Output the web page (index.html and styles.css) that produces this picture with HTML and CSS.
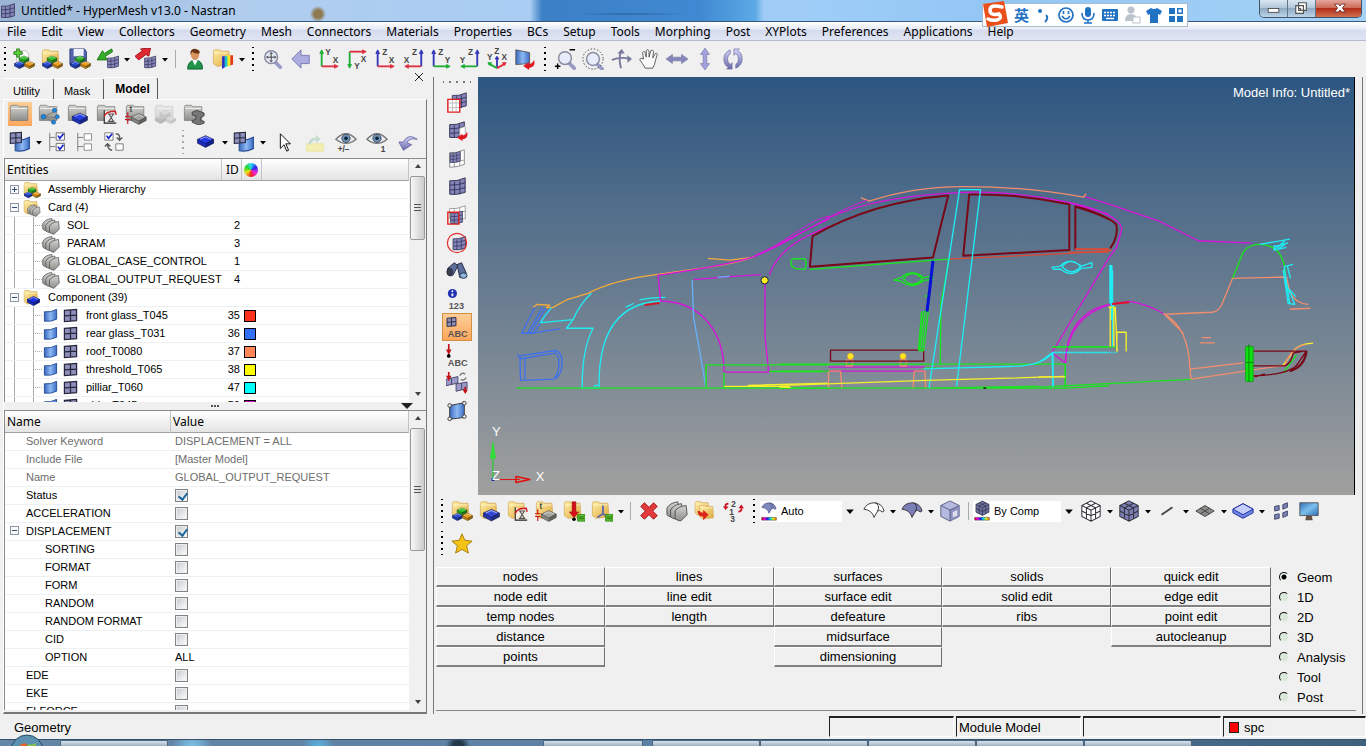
FILE: index.html
```html
<!DOCTYPE html>
<html lang="en">
<head>
<meta charset="utf-8">
<title>Untitled* - HyperMesh v13.0 - Nastran</title>
<link rel="stylesheet" href="styles.css">
</head>
<body>
<svg class="sprite" aria-hidden="true">
  <defs>
    <linearGradient id="gFolder" x2="1" y2="1"><stop stop-color="#fff0a8"/><stop offset="1" stop-color="#dfa73c"/></linearGradient>
    <linearGradient id="gGrey" x2="0" y2="1"><stop stop-color="#d4d4d0"/><stop offset="1" stop-color="#8d8d8a"/></linearGradient>
    <linearGradient id="gSurf" x2="1" y2="0"><stop stop-color="#3a68c0"/><stop offset=".5" stop-color="#8db9f2"/><stop offset="1" stop-color="#3d6ec8"/></linearGradient>
    <linearGradient id="gRain" x2="1" y2="0"><stop stop-color="#e00"/><stop offset=".2" stop-color="#e0e"/><stop offset=".4" stop-color="#22e"/><stop offset=".6" stop-color="#0dd"/><stop offset=".8" stop-color="#ee0"/><stop offset="1" stop-color="#f60"/></linearGradient>
    <linearGradient id="gLav" x2="0" y2="1"><stop stop-color="#d5d5ff"/><stop offset="1" stop-color="#6868a8"/></linearGradient>
    <linearGradient id="gScreen" x2="1" y2="1"><stop stop-color="#2f72b8"/><stop offset=".5" stop-color="#7cc0ee"/><stop offset="1" stop-color="#2a6cb0"/></linearGradient>
  </defs>
  <symbol id="box" viewBox="0 0 16 12"><path d="M8 .5L15.500 4v3.500L8 11.500.5 7.500V4z" fill="currentColor"/><path d="M.5 4L8 8v3.500L.5 7.500z" fill="#000" opacity=".2"/><path d="M15.500 4L8 8v3.500l7.500-4z" fill="#000" opacity=".4"/><path d="M8 .5L15.500 4v3.500L8 11.500.5 7.500V4z M.5 4L8 8l7.500-4" fill="none" stroke="#000" stroke-opacity=".5" stroke-width=".7"/><path d="M3 4l5-2.300L13 4" fill="none" stroke="#fff" stroke-opacity=".5"/></symbol>
  <symbol id="folder" viewBox="0 0 24 24"><path d="M1.500 3.500l1-1.500h6l1 1.500h9l1 15-14 1.500-4-3z" fill="url(#gFolder)" stroke="#d0a858" stroke-width=".8"/><path d="M2 5.500h16" stroke="#fff5c8"/></symbol>
  <symbol id="gfolder" viewBox="0 0 24 24"><path d="M1.500 4.500l1-2h7l1 1.500h10v15h-19z" fill="url(#gGrey)" stroke="#777" stroke-width=".8"/><path d="M2 6h18" stroke="#eee"/></symbol>
  <symbol id="blocks" viewBox="0 0 24 24"><use href="#box" x="6" y="8" width="12" height="9" color="#35c22c"/><use href="#box" x="1" y="14" width="12" height="9" color="#2d4fd8"/><use href="#box" x="12" y="14" width="12" height="9" color="#eda020"/></symbol>
  <symbol id="mesh" viewBox="0 0 20 20"><path d="M2 4Q9 5 18 1V16Q10 19 2 18z" fill="#8585ba" stroke="#303050"/><path d="M2 8.500Q10 9 18 6M2 13.500Q10 14 18 11M7 5v13.500M12.500 3.500V18" fill="none" stroke="#34345a"/></symbol>
  <symbol id="surface" viewBox="0 0 16 16"><path d="M1.500 4Q8 5 14.500 1.500V12Q8 15 1.500 14z" fill="url(#gSurf)" stroke="#234a94"/></symbol>
  <symbol id="cell4" viewBox="0 0 16 16"><path d="M1.500 2.500l13-1v12l-13 1zM8 2v12M1.500 8.500l13-1" fill="#8e8ebb" stroke="#26263a" stroke-width="1.300"/></symbol>
  <symbol id="cards" viewBox="0 0 24 24"><g fill="url(#gGrey)" stroke="#505050"><path d="M1 9q3-6 12-7l1 10-7 7q-5-1-6-3z"/><path d="M5 11q3-6 12-7l1 10-7 7q-5-1-6-3z"/><path d="M10 12q3-5 12-6l1 10-7 7q-5-1-6-3z"/></g></symbol>
  <symbol id="caret" viewBox="0 0 10 24"><path d="M2 11h6l-3 3.500z" fill="#000"/></symbol>
  <symbol id="lens" viewBox="0 0 24 24"><path d="M14 15l6 6" stroke="#9a9ac8" stroke-width="4" stroke-linecap="round"/><circle cx="10" cy="10" r="7" fill="#e6ecfa" stroke="#8a8aa0" stroke-width="1.600"/></symbol>
  <symbol id="reddown" viewBox="0 0 24 24"><path d="M10 1h4v11h3l-5 6-5-6h3z" fill="#d8101c" stroke="#8a0008" stroke-width=".6"/></symbol>
  <symbol id="hook" viewBox="0 0 12 10"><path d="M11 0q2 7-5 8v2L0 6l6-4v2q3 0 5-4z" fill="#e01820"/></symbol>
  <symbol id="cube3" viewBox="0 0 24 24"><path d="M12 1l10 5v12l-10 5-10-5V6z" fill="currentColor"/><path d="M12 1l10 5v12l-10 5-10-5V6zM2 6l10 5 10-5M12 11v12M7 3.500l10 5V20.500M17 3.500L7 8.500v12M2 12l10 5 10-5" fill="none" stroke="#30303c" stroke-width="1.100"/></symbol>
  <symbol id="eye" viewBox="0 0 24 24"><path d="M1 9Q12-3 23 9q-11 9-22 0z" fill="#e8edf2" stroke="#777" stroke-width="1.500"/><circle cx="12" cy="8" r="4.500" fill="#6b93b8" stroke="#445"/><circle cx="12" cy="8" r="2" fill="#123"/></symbol>
  <symbol id="sheet" viewBox="0 0 24 24"><path d="M1 10Q4 3 13 3q8 1 10 9l-2 1q-3-3-5-1l-4 7q-2-8-11-9z"/><path d="M13 3q6 2 3 9" fill="none"/></symbol>
  <symbol id="hourglass" viewBox="0 0 24 24"><path d="M9 8v14h13" fill="none" stroke="#222" stroke-width="1.200"/><path d="M9 15q1-6 12-6l1 4" fill="none" stroke="#d01c20" stroke-width="1.500"/><path d="M13 12h7M13 20h7M14 12l5 8M19 12l-5 8" stroke="#555" stroke-width="1.200"/></symbol>
  <symbol id="thick" viewBox="0 0 24 24"><use href="#box" x="6" y="11" width="18" height="13" color="#a5a5a0"/><path d="M3 10v5M3 18v5M0 15h6M0 18h6" stroke="#d01020" stroke-width="1.200"/></symbol>
</svg>

<header class="titlebar">
  <svg class="app-icon"><use href="#mesh"/></svg>
  <h1>Untitled* - HyperMesh v13.0 - Nastran</h1>
  <div class="window-buttons">
    <button aria-label="Minimize"><svg viewBox="0 0 28 17"><rect x="8.500" y="8.500" width="11" height="4" fill="#fff" stroke="#555"/></svg></button>
    <button aria-label="Restore"><svg viewBox="0 0 28 17"><path d="M11 2.500h8v8h-8z M8 5.500h8v8H8z M11 8.500h2v2h-2z" fill="#fff" stroke="#555" stroke-width="1.200"/></svg></button>
    <button class="close" aria-label="Close"><svg viewBox="0 0 46 17"><path d="M19 4h4l1.500 2L26 4h4l-3 4 3 4h-4l-1.500-2L23 12h-4l3-4z" fill="#fff" stroke="#5a1a14" stroke-width=".8"/></svg></button>
  </div>
  <div class="ime">
    <svg class="ime-logo" viewBox="0 0 28 28"><path d="M2 4L23 1l4 22-21 4z" fill="#e9501c"/><path d="M21 7Q9 4 9 10t9 4q4 4-2 6-5 1-9-1" fill="none" stroke="#fff" stroke-width="3.500" stroke-linecap="round"/></svg>
    <span class="ime-lang">英</span>
    <svg viewBox="0 0 22 22" class="ime-i"><circle cx="7" cy="7" r="2" fill="#2272c3"/><path d="M13 11q3 3-1 7" stroke="#2272c3" stroke-width="2" fill="none"/></svg>
    <svg viewBox="0 0 22 22" class="ime-i"><g fill="none" stroke="#2272c3" stroke-width="1.700"><circle cx="11" cy="11" r="7"/><path d="M7 12q4 6 8 0M8.500 7v3M13.500 7v3"/></g></svg>
    <svg viewBox="0 0 22 22" class="ime-i"><rect x="8" y="3" width="6" height="10" rx="3" fill="#2272c3"/><path d="M5 9q0 7 6 7t6-7M11 16v3M7 19h8" fill="none" stroke="#2272c3" stroke-width="1.600"/></svg>
    <svg viewBox="0 0 22 22" class="ime-i"><rect x="3" y="5" width="16" height="12" rx="1" fill="#2272c3"/><path d="M5 8.500h12M5 11.500h12" stroke="#fff" stroke-width="1.500" stroke-dasharray="2 1"/><path d="M7 14.500h8" stroke="#fff" stroke-width="1.500"/></svg>
    <svg viewBox="0 0 22 22" class="ime-i"><circle cx="10" cy="6" r="3.500" fill="#bcc3cc"/><path d="M4 17q0-7 6-7t6 7z" fill="#bcc3cc"/><rect x="12" y="13" width="7" height="6" fill="#fff" stroke="#bcc3cc"/></svg>
    <svg viewBox="0 0 22 22" class="ime-i"><path d="M8 4q3 2 6 0l5 3-2 4-2-1v9H7v-9l-2 1-2-4z" fill="#2272c3"/></svg>
    <svg viewBox="0 0 22 22" class="ime-i"><path d="M4 4h6v6H4zM4 12h6v6H4zM12 12h6v6h-6z" fill="#2272c3"/><path d="M12.700 4.700h4.600v4.600h-4.600z" fill="#fff" stroke="#2272c3" stroke-width="1.400"/></svg>
  </div>
</header>

<nav class="menubar" aria-label="Main menu">
  <button>File</button><button>Edit</button><button>View</button><button>Collectors</button><button>Geometry</button><button>Mesh</button><button>Connectors</button><button>Materials</button><button>Properties</button><button>BCs</button><button>Setup</button><button>Tools</button><button>Morphing</button><button>Post</button><button>XYPlots</button><button>Preferences</button><button>Applications</button><button>Help</button>
</nav>

<div class="toolbar top-tools" role="toolbar" aria-label="Standard">
  <i class="grip"></i>
  <button class="tool" aria-label="New"><svg viewBox="0 0 24 24"><path d="M4 3h10l3 3v14H4z" fill="#fbfbfb" stroke="#bbb"/><use href="#blocks"/><path d="M1 4h3V1h3v3h3v3H7v3H4V7H1z" fill="#5fd042" stroke="#27801b"/></svg></button>
  <button class="tool" aria-label="Open"><svg viewBox="0 0 24 24"><use href="#folder"/><use href="#blocks"/></svg></button>
  <button class="tool" aria-label="Save"><svg viewBox="0 0 24 24"><path d="M1 1h16l2 3v14H1z" fill="#5163aa" stroke="#30407c"/><path d="M5 1h11v8H5z" fill="#eef1fa"/><path d="M6 13h8v5H6z" fill="#ddd"/><use href="#blocks"/></svg></button>
  <button class="tool" aria-label="Import"><svg viewBox="0 0 24 24"><use href="#mesh" x="10" y="8" width="15" height="15"/><path d="M16 1l-8 5-2-3-6 10h11l-2-4 8-5z" fill="#35ad2b" stroke="#187414"/></svg></button>
  <button class="drop" aria-label="Import options"><svg><use href="#caret"/></svg></button>
  <button class="tool" aria-label="Export"><svg viewBox="0 0 24 24"><use href="#mesh" x="9" y="8" width="15" height="15"/><path d="M0 9l8-6-2-2 11-1-2 9-3-2-8 6z" fill="#e02a32" stroke="#9b1018"/></svg></button>
  <button class="drop" aria-label="Export options"><svg><use href="#caret"/></svg></button>
  <i class="sep"></i>
  <button class="tool" aria-label="User profiles"><svg viewBox="0 0 24 24"><path d="M4 23q0-9 8-10 9 1 8 10z" fill="#22944b" stroke="#0c5c2a"/><path d="M9 13l3 6 3-6z" fill="#fff"/><ellipse cx="12" cy="7" rx="4.500" ry="6" fill="#d9935d"/><path d="M7 8q-1-8 6-7 5 1 4 5-6 0-8-2-1 1-2 4z" fill="#693516"/></svg></button>
  <button class="tool" aria-label="Open results"><svg viewBox="0 0 24 24"><use href="#folder"/><path d="M11 9h3v12l-3 2z" fill="#2530c8"/><path d="M14 9h3v11l-3 1z" fill="#15c6cf"/><path d="M17 8h3v11l-3 1z" fill="#f4e920"/><path d="M20 8h3v10l-3 1z" fill="#e33a14"/></svg></button>
  <button class="drop" aria-label="Results options"><svg><use href="#caret"/></svg></button>
  <i class="grip mid"></i>
  <button class="tool" aria-label="Fit"><svg viewBox="0 0 24 24"><use href="#lens"/><path d="M10 5v10M5 10h10M8.500 6.500L10 5l1.500 1.500M8.500 13.500L10 15l1.500-1.500M6.500 8.500L5 10l1.500 1.500M13.500 8.500L15 10l-1.500 1.500" stroke="#333" fill="none"/></svg></button>
  <button class="tool" aria-label="Previous view"><svg viewBox="0 0 24 24"><path d="M2 12L12 2v6h9v9h-9v5z" fill="#abace0" stroke="#7779b0"/></svg></button>
  <button class="tool" aria-label="XY top"><svg viewBox="0 0 24 24" class="axis"><path class="g" d="M4 20V5"/><path class="gf" d="M2 6l2-4 2 4z"/><path class="r" d="M4 20h14"/><path class="rf" d="M18 18l4 2-4 2z"/><text x="8" y="8">Y</text><text x="16" y="16">X</text></svg></button>
  <button class="tool" aria-label="XY bottom"><svg viewBox="0 0 24 24" class="axis"><path class="g" d="M4 4v14"/><path class="gf" d="M2 18l2 4 2-4z"/><path class="r" d="M4 4h14"/><path class="rf" d="M18 2l4 2-4 2z"/><text x="9" y="23">Y</text><text x="16" y="15">X</text></svg></button>
  <button class="tool" aria-label="XZ left"><svg viewBox="0 0 24 24" class="axis"><path class="b" d="M4 20V5"/><path class="bf" d="M2 6l2-4 2 4z"/><path class="r" d="M4 20h14"/><path class="rf" d="M18 18l4 2-4 2z"/><text x="9" y="8">Z</text><text x="16" y="16">X</text></svg></button>
  <button class="tool" aria-label="XZ right"><svg viewBox="0 0 24 24" class="axis"><path class="b" d="M21 20V5"/><path class="bf" d="M19 6l2-4 2 4z"/><path class="r" d="M21 20H7"/><path class="rf" d="M7 18l-4 2 4 2z"/><text x="11" y="8">Z</text><text x="2" y="16">X</text></svg></button>
  <button class="tool" aria-label="YZ rear"><svg viewBox="0 0 24 24" class="axis"><path class="b" d="M4 20V5"/><path class="bf" d="M2 6l2-4 2 4z"/><path class="g" d="M4 20h14"/><path class="gf" d="M18 18l4 2-4 2z"/><text x="9" y="8">Z</text><text x="16" y="16">Y</text></svg></button>
  <button class="tool" aria-label="YZ front"><svg viewBox="0 0 24 24" class="axis"><path class="b" d="M21 20V5"/><path class="bf" d="M19 6l2-4 2 4z"/><path class="g" d="M21 20H7"/><path class="gf" d="M7 18l-4 2 4 2z"/><text x="11" y="8">Z</text><text x="2" y="16">Y</text></svg></button>
  <button class="tool" aria-label="Isometric"><svg viewBox="0 0 24 24" class="axis"><path class="b" d="M12 21V12"/><path class="bf" d="M10 12l2-3 2 3z"/><path class="g" d="M12 22l-9-5"/><path class="gf" d="M2 16l4 0-2 3z"/><path class="r" d="M12 22l9-5"/><path class="rf" d="M22 16l-4 0 2 3z"/><text x="9" y="7">Z</text><text x="1" y="13">Y</text><text x="17" y="13">X</text></svg></button>
  <button class="tool" aria-label="Reverse view"><svg viewBox="0 0 24 24"><path d="M2 2l15 3v12L2 18z" fill="url(#gSurf)" stroke="#555"/><use href="#hook" x="10" y="13" width="13" height="11"/></svg></button>
  <i class="grip mid"></i>
  <button class="tool" aria-label="Zoom in or out"><svg viewBox="0 0 24 24"><use href="#lens" x="2" y="1"/><path d="M17 2h6M1 20h6M4 17v6" stroke="#000" stroke-width="1.600"/></svg></button>
  <button class="tool" aria-label="Circle zoom"><svg viewBox="0 0 24 24"><use href="#lens" x="2" y="2"/><circle cx="12" cy="12" r="11" fill="none" stroke="#333" stroke-dasharray="1.500 2"/></svg></button>
  <button class="tool" aria-label="Rotate"><svg viewBox="0 0 24 24"><path d="M2 13q10-4 20-1M12 3q-3 9 0 19" fill="none" stroke="#777a9c" stroke-width="2"/><path d="M8 6l5-5 3 5zM19 8l5 4-5 4z" fill="#777a9c"/></svg></button>
  <button class="tool" aria-label="Pan"><svg viewBox="0 0 24 24"><path d="M8 22q-3-5-6-9 0-3 4-1L5 5q2-3 3 1l1 4V3q2-3 3 0v7l2-7q2-2 3 1l-1 7 3-5q2-1 2 1-2 6-3 11l-2 4z" fill="#fafafa" stroke="#555"/></svg></button>
  <button class="tool" aria-label="Arrow left and right"><svg viewBox="0 0 24 24"><path d="M0 12l7-5v3h10V7l7 5-7 5v-3H7v3z" fill="#8686bd" stroke="#6c6c9c" stroke-width=".6"/></svg></button>
  <button class="tool" aria-label="Arrow up and down"><svg viewBox="0 0 24 24"><path d="M12 0l5 7h-3v10h3l-5 7-5-7h3V7H7z" fill="#a1a1dc" stroke="#6c6c9c" stroke-width=".6"/></svg></button>
  <button class="tool" aria-label="Spin"><svg viewBox="0 0 24 24"><path d="M9 2q-7 3-7 10t5 9l-2 2h6v-7l-2 2q-3-2-3-6t3-6zM15 22q7-3 7-10t-5-9l2-2h-6v7l2-2q3 2 3 6t-3 6z" fill="url(#gLav)" stroke="#67679a" stroke-width=".7"/></svg></button>
</div>

<main class="workspace">
  <aside class="dock">
    <div class="tabs" role="tablist"><button role="tab">Utility</button><button role="tab">Mask</button><button role="tab" class="active" aria-selected="true">Model</button><button class="dock-close" aria-label="Close panel"><svg viewBox="0 0 8 8"><path d="M0 0l8 8M8 0L0 8" stroke="#222"/></svg></button></div>
    <div class="browser">
      <div class="toolbar views">
        <button class="tool on" aria-label="Model view"><svg viewBox="0 0 24 24"><use href="#gfolder"/></svg></button>
        <button class="tool" aria-label="Assembly view"><svg viewBox="0 0 24 24"><use href="#gfolder"/><path d="M7 15l11-6M7 15l12 1M7 15l9 6" stroke="#777"/><g fill="#1f86d8" stroke="#0b4c8c" stroke-width=".5"><circle cx="6" cy="15" r="2.600"/><circle cx="18" cy="8" r="2.300"/><circle cx="21" cy="15" r="2.300"/><circle cx="17" cy="21" r="2.300"/></g></svg></button>
        <button class="tool" aria-label="Component view"><svg viewBox="0 0 24 24"><use href="#gfolder"/><use href="#box" x="5" y="10" width="18" height="14" color="#2840e8"/></svg></button>
        <button class="tool" aria-label="Material view"><svg viewBox="0 0 24 24"><use href="#gfolder"/><path d="M9 9h13v14H9z" fill="#eee"/><use href="#hourglass"/></svg></button>
        <button class="tool" aria-label="Property view"><svg viewBox="0 0 24 24" class="axis"><use href="#gfolder"/><use href="#thick"/><text x="5" y="10">t</text></svg></button>
        <button class="tool faded" aria-label="Laminate view"><svg viewBox="0 0 24 24"><use href="#gfolder"/><use href="#blocks"/></svg></button>
        <button class="tool" aria-label="Beam view"><svg viewBox="0 0 24 24"><use href="#gfolder"/><path d="M10 10l5-2 8 3v3l-4 2v3l4 1v2l-6 2-7-3v-2l4-1v-4l-4-1z" fill="#777" stroke="#444"/></svg></button>
      </div>
      <div class="toolbar views states">
        <button class="tool" aria-label="Entity state"><svg viewBox="0 0 24 24"><use href="#surface" x="5" y="5" width="19" height="19"/><use href="#cell4" x="0" y="0" width="15" height="15"/></svg></button>
        <button class="drop" aria-label="State options"><svg><use href="#caret"/></svg></button>
        <button class="tool" aria-label="All"><svg viewBox="0 0 24 24"><path d="M3 2v20M3 7h6M3 17h6" stroke="#777" fill="none"/><path d="M10 2h9v8h-9zM10 13.500h9v8h-9z" fill="#fff" stroke="#666"/><path d="M12 5l2 3 4-5M12 17l2 3 4-5" stroke="#1520c8" stroke-width="1.800" fill="none"/></svg></button>
        <button class="tool" aria-label="None"><svg viewBox="0 0 24 24"><path d="M3 2v20M3 7h6M3 17h6" stroke="#777" fill="none"/><path d="M10 3h8v7h-8zM10 14h8v7h-8z" fill="#fff" stroke="#888"/></svg></button>
        <button class="tool" aria-label="Reverse"><svg viewBox="0 0 24 24"><path d="M2 2h9v8H2zM14 14h8v7h-8z" fill="#fff" stroke="#777"/><path d="M4 5l2 3 4-5" stroke="#1520c8" stroke-width="1.800" fill="none"/><path d="M14 3q5 0 4 6M15 7l3 3 3-3M10 21q-5-1-5-6M2 17l3-3 3 3" stroke="#555" stroke-width="1.500" fill="none"/></svg></button>
        <i class="grip pale"></i>
        <button class="tool" aria-label="Elements"><svg viewBox="0 0 24 24"><use href="#box" x="2" y="4" width="19" height="15" color="#2338e6"/></svg></button>
        <button class="drop" aria-label="Element options"><svg><use href="#caret"/></svg></button>
        <button class="tool" aria-label="Elements and geometry"><svg viewBox="0 0 24 24"><use href="#surface" x="5" y="5" width="19" height="19"/><use href="#cell4" x="0" y="0" width="15" height="15"/></svg></button>
        <button class="drop" aria-label="Geometry options"><svg><use href="#caret"/></svg></button>
        <button class="tool" aria-label="Select"><svg viewBox="0 0 24 24"><path d="M8 3v16l4-4 3 7 2-1-3-7h5z" fill="#fff" stroke="#000"/></svg></button>
        <button class="tool" aria-label="Add to panel"><svg viewBox="0 0 24 24"><path d="M3 14h18v8H3z" fill="#f4efb2" stroke="#ebe49d"/><path d="M5 15q0-8 8-8V4l5 5-5 4v-3q-4 0-6 5z" fill="#c3dccf"/></svg></button>
        <button class="tool" aria-label="Show or hide"><svg viewBox="0 0 24 24" class="axis"><use href="#eye"/><text x="3" y="23">+/−</text></svg></button>
        <button class="tool" aria-label="Isolate"><svg viewBox="0 0 24 24" class="axis"><use href="#eye"/><text x="16" y="23">1</text></svg></button>
        <button class="tool" aria-label="Undo"><svg viewBox="0 0 24 24"><path d="M22 9Q12 2 7 12l-5 0 5 9 9-6-5-2q2-6 11-4z" fill="url(#gLav)" stroke="#6a6aa6"/></svg></button>
      </div>
      <section class="pane tree">
        <div class="pane-body">
          <table>
            <colgroup><col class="c-ent"><col class="c-id"><col class="c-col"><col></colgroup>
            <thead><tr><th>Entities</th><th>ID</th><th><span class="wheel"></span></th><th></th></tr></thead>
            <tbody>
              <tr><td><div class="node top"><i class="twist plus"></i><svg viewBox="0 0 24 24"><use href="#folder"/><use href="#blocks"/></svg>Assembly Hierarchy</div></td><td></td><td></td><td></td></tr>
              <tr><td><div class="node top"><i class="twist"></i><svg viewBox="0 0 24 24"><use href="#folder"/><use href="#cards" x="5" y="6" width="19" height="18"/></svg>Card (4)</div></td><td></td><td></td><td></td></tr>
              <tr><td><div class="node leaf"><svg><use href="#cards"/></svg>SOL</div></td><td>2</td><td></td><td></td></tr>
              <tr><td><div class="node leaf"><svg><use href="#cards"/></svg>PARAM</div></td><td>3</td><td></td><td></td></tr>
              <tr><td><div class="node leaf"><svg><use href="#cards"/></svg>GLOBAL_CASE_CONTROL</div></td><td>1</td><td></td><td></td></tr>
              <tr><td><div class="node leaf"><svg><use href="#cards"/></svg>GLOBAL_OUTPUT_REQUEST</div></td><td>4</td><td></td><td></td></tr>
              <tr><td><div class="node top"><i class="twist"></i><svg viewBox="0 0 24 24"><use href="#folder"/><use href="#box" x="5" y="9" width="18" height="14" color="#1c34e8"/></svg>Component (39)</div></td><td></td><td></td><td></td></tr>
              <tr><td><div class="node leaf comp"><svg><use href="#surface"/></svg><svg><use href="#cell4"/></svg>front glass_T045</div></td><td>35</td><td><i class="swatch red"></i></td><td></td></tr>
              <tr><td><div class="node leaf comp"><svg><use href="#surface"/></svg><svg><use href="#cell4"/></svg>rear glass_T031</div></td><td>36</td><td><i class="swatch blue"></i></td><td></td></tr>
              <tr><td><div class="node leaf comp"><svg><use href="#surface"/></svg><svg><use href="#cell4"/></svg>roof_T0080</div></td><td>37</td><td><i class="swatch coral"></i></td><td></td></tr>
              <tr><td><div class="node leaf comp"><svg><use href="#surface"/></svg><svg><use href="#cell4"/></svg>threshold_T065</div></td><td>38</td><td><i class="swatch yellow"></i></td><td></td></tr>
              <tr><td><div class="node leaf comp"><svg><use href="#surface"/></svg><svg><use href="#cell4"/></svg>pilliar_T060</div></td><td>47</td><td><i class="swatch cyan"></i></td><td></td></tr>
              <tr><td><div class="node leaf comp"><svg><use href="#surface"/></svg><svg><use href="#cell4"/></svg>side_T045</div></td><td>50</td><td><i class="swatch magenta"></i></td><td></td></tr>
            </tbody>
          </table>
        </div>
        <div class="scroll"><i class="up"></i><i class="thumb short"></i><i class="down"></i></div>
      </section>
      <div class="splitter"><span></span><b></b></div>
      <section class="pane props">
        <div class="pane-body">
          <table>
            <colgroup><col class="c-name"><col></colgroup>
            <thead><tr><th>Name</th><th>Value</th></tr></thead>
            <tbody>
              <tr class="dim"><td>Solver Keyword</td><td>DISPLACEMENT = ALL</td></tr>
              <tr class="dim"><td>Include File</td><td>[Master Model]</td></tr>
              <tr class="dim"><td>Name</td><td>GLOBAL_OUTPUT_REQUEST</td></tr>
              <tr><td><label for="p1">Status</label></td><td><input id="p1" type="checkbox" checked></td></tr>
              <tr><td><label for="p2">ACCELERATION</label></td><td><input id="p2" type="checkbox"></td></tr>
              <tr class="parent"><td><i class="twist"></i><label for="p3">DISPLACEMENT</label></td><td><input id="p3" type="checkbox" checked></td></tr>
              <tr class="child"><td><label for="p4">SORTING</label></td><td><input id="p4" type="checkbox"></td></tr>
              <tr class="child"><td><label for="p5">FORMAT</label></td><td><input id="p5" type="checkbox"></td></tr>
              <tr class="child"><td><label for="p6">FORM</label></td><td><input id="p6" type="checkbox"></td></tr>
              <tr class="child"><td><label for="p7">RANDOM</label></td><td><input id="p7" type="checkbox"></td></tr>
              <tr class="child"><td><label for="p8">RANDOM FORMAT</label></td><td><input id="p8" type="checkbox"></td></tr>
              <tr class="child"><td><label for="p9">CID</label></td><td><input id="p9" type="checkbox"></td></tr>
              <tr class="child"><td>OPTION</td><td>ALL</td></tr>
              <tr><td><label for="p10">EDE</label></td><td><input id="p10" type="checkbox"></td></tr>
              <tr><td><label for="p11">EKE</label></td><td><input id="p11" type="checkbox"></td></tr>
              <tr><td><label for="p12">ELFORCE</label></td><td><input id="p12" type="checkbox"></td></tr>
            </tbody>
          </table>
        </div>
        <div class="scroll"><i class="up"></i><i class="thumb"></i><i class="down"></i></div>
      </section>
    </div>
  </aside>

  <section class="stage">
    <div class="view-row">
      <div class="strip" role="toolbar" aria-label="Display">
        <i class="grip flat"></i>
        <button class="tool" aria-label="Mask"><svg viewBox="0 0 24 24"><use href="#mesh" x="5" y="0" width="19" height="19"/><path d="M3 8h12v14H3z" fill="#fff"/><path d="M3 12h12M3 17h12M7 8v14M11 8v14" stroke="#bbb"/><path d="M2 8h13v14H2z" fill="none" stroke="#e02020" stroke-width="1.500"/></svg></button>
        <button class="tool" aria-label="Reverse mask"><svg viewBox="0 0 24 24"><use href="#mesh" x="2" y="1" width="20" height="20"/><path d="M15 9l6-2v9l-6 3z" fill="#fff" stroke="#aaa"/><use href="#hook" x="12" y="13" width="12" height="10"/></svg></button>
        <button class="tool" aria-label="Unmask adjacent"><svg viewBox="0 0 24 24"><path d="M4 5q8 1 16-3v16q-8 3-16 3z" fill="#fff" stroke="#888"/><path d="M4 16q8 0 16-3M9 5v16M15 4v15" stroke="#999" fill="none"/><use href="#mesh" x="3" y="3" width="14" height="14"/></svg></button>
        <button class="tool" aria-label="Unmask all"><svg viewBox="0 0 24 24"><use href="#mesh" x="2" y="1" width="21" height="21"/></svg></button>
        <button class="tool" aria-label="Unmask shown"><svg viewBox="0 0 24 24"><path d="M4 5q8 1 17-3v14H4zM9 5v10M15 4v10M4 10l17-2" fill="#fff" stroke="#999"/><use href="#mesh" x="3" y="7" width="17" height="16"/><path d="M2 9h12v13H2z" fill="none" stroke="#e02020" stroke-width="1.500"/></svg></button>
        <button class="tool" aria-label="Spherical clip"><svg viewBox="0 0 24 24"><use href="#mesh" x="6" y="4" width="17" height="17"/><circle cx="12" cy="12" r="10.500" fill="none" stroke="#e03030" stroke-width="1.300"/></svg></button>
        <button class="tool" aria-label="Find"><svg viewBox="0 0 24 24"><g fill="#5d6d9a" stroke="#20283c"><path d="M2 9l7-6 4 3-5 10q-4 3-6-1z"/><path d="M12 5l5-2 5 11q-1 6-7 5z"/><ellipse cx="4" cy="13" rx="3" ry="4" fill="#3a3f50"/><ellipse cx="19" cy="17" rx="4" ry="3" fill="#8fb4e0"/></g></svg></button>
        <button class="tool" aria-label="Numbers"><svg viewBox="0 0 24 24" class="cap"><circle cx="7" cy="6" r="5" fill="#2430b4"/><path d="M7 6v3" stroke="#fff" stroke-width="2"/><circle cx="7" cy="3.500" r="1" fill="#fff"/><text x="3" y="23">123</text></svg></button>
        <button class="tool on" aria-label="Component labels"><svg viewBox="0 0 24 24" class="cap"><use href="#cell4" x="0" y="0" width="12" height="13"/><text x="2" y="23">ABC</text></svg></button>
        <button class="tool" aria-label="Load labels"><svg viewBox="0 0 24 24" class="cap"><path d="M3 0v8" stroke="#c01018" stroke-width="1.800"/><path d="M0 6h6l-3 6z" fill="#c01018"/><circle cx="3" cy="13" r="2"/><text x="2" y="24">ABC</text></svg></button>
        <button class="tool" aria-label="Load handles"><svg viewBox="0 0 24 24"><path d="M0 8l13-3v7L0 15zM11 13l12-2v7l-12 3zM6 7v7M17 12v7" fill="#9a9ac8" stroke="#44446a"/><path d="M3 0v5M21 16v4" stroke="#c01018" stroke-width="1.800"/><path d="M0 4h6l-3 6zM18 19h6l-3 5z" fill="#c01018"/><path d="M15 4q2-4 6-2M22 6q-2 4-6 2" fill="none" stroke="#777" stroke-width="1.500"/></svg></button>
        <button class="tool" aria-label="Surface lines"><svg viewBox="0 0 24 24"><path d="M4 6l16-3v16L4 21z" fill="url(#gSurf)" stroke="#333"/><g fill="#eee" stroke="#333"><circle cx="4" cy="6" r="2"/><circle cx="20" cy="3.500" r="2"/><circle cx="20" cy="18" r="2"/><circle cx="4" cy="20.500" r="2"/></g></svg></button>
      </div>
      <div class="canvas">
        <p class="model-info">Model Info: Untitled*</p>
        <svg viewBox="478 77 878 418" class="model" aria-label="Car model wireframe">
          <g transform="translate(500 170) scale(.33333)">
            <path class="w-blue" d="M105 412L65 490H102L150 415M128 412L83 490M103 488L180 477M60 558L165 542Q187 545 187 580Q185 620 162 628L62 632ZM75 562V628M62 567L165 550Q180 555 177 585Q176 610 165 622M52 553L65 567M92 488L138 413"/>
            <path class="w-orange" d="M100 412L112 403 150 406 140 413H158L200 390 265 370Q340 330 475 313L640 290Q720 277 765 260M625 265L690 270 760 262"/>
            <path class="w-cyan" d="M155 413Q135 435 122 458L220 449M275 370Q238 405 220 449L200 475H280Q247 535 247 655H286V647H298C297 525 330 400 483 393M378 412L402 400M420 390Q450 382 497 382M286 655H298V647"/>
            <path class="w-magenta" d="M475 313L483 393C600 395 674 480 674 607H808L797 500V343M475 316Q680 287 765 260L850 220 990 142M765 258L850 217 935 172 990 146M810 315Q835 240 935 192L990 168M583 329L690 320 785 314"/>
            <path class="w-sky" d="M578 330L582 440 620 655M655 322L690 319"/>
            <path class="w-green" d="M50 655H990M620 655V585H990M810 605H990M674 607V655M674 655H850V659"/>
            <path class="w-yellow" d="M674 650H870M745 647L990 640"/>
            <path d="M435 405L480 399" stroke="#d01828" stroke-width="6"/>
            <circle cx="796" cy="331" r="11" fill="#ffef20" stroke="#18184c" stroke-width="3"/>
          </g>
          <g transform="translate(780 170) scale(.33333)">
            <path class="w-magenta" d="M150 142Q290 78 540 67Q700 60 870 97L990 132M148 592H438M130 604H438M820 548L990 265M820 548L860 580Q865 430 990 403"/>
            <path class="w-coral" d="M245 82L270 93Q400 50 550 49Q740 48 915 81L922 70M148 655V604H184L188 655M402 655L406 604H438L440 655M202 588V570H220V588ZM364 588V570H382V588Z"/>
            <path class="w-maroon thick" d="M100 198Q280 95 508 76L462 262 92 290ZM571 73Q720 70 872 102V240L553 257ZM990 146Q940 120 890 109V240"/>
            <path class="w-maroon" d="M154 541H434V574H154Z"/>
            <path class="w-red" d="M510 267L870 250 990 243M890 238L990 236"/>
            <path class="w-green" d="M92 298L510 267Q500 330 486 400L484 585M36 270Q32 290 50 296L78 298Q85 275 76 266L42 266ZM0 583H860V650M0 655H860L990 648M345 330L365 323Q400 295 435 323L460 318V328L432 332Q400 360 367 334ZM373 327Q400 295 430 327Q402 358 373 327ZM0 604H150M440 655L780 650M434 595H490M820 531H990"/>
            <path class="w-cyan" d="M450 655L542 58H605L533 650M434 597L690 590Q790 590 820 550L823 652M820 292L845 288Q870 260 908 288L940 278V292L908 295Q880 325 845 297L825 298ZM850 290Q878 258 906 290Q880 320 850 290Z"/>
            <path class="w-cyan dotted" d="M820 548H990"/>
            <path class="w-yellow" d="M0 645L40 646 440 632 860 620M0 652L35 653"/>
            <path class="w-green" d="M434 425L422 542H434L448 425ZM438 378H452L442 425M428 425L418 542"/>
            <path d="M462 272L452 360 444 425" stroke="#0610d8" stroke-width="9" fill="none"/>
            <path class="w-green" d="M440 430L428 542"/>
            <circle cx="214" cy="559" r="9" class="weld"/><circle cx="372" cy="559" r="9" class="weld"/>
            <path d="M614 655h8" stroke="#000" stroke-width="4"/>
          </g>
          <path class="w-magenta join" d="M778 244L813 222Q826 216 832 216M827 219Q845 208 868 200"/>
          <g transform="translate(1040 170) scale(.33333)">
            <path class="w-magenta" d="M140 80L200 98 360 152 480 212 640 219M90 97Q240 130 250 175L235 230 210 265M80 580Q85 440 220 402L275 394Q335 405 378 433"/>
            <path class="w-maroon thick" d="M110 109Q225 145 234 165Q240 200 215 235"/>
            <path class="w-red" d="M110 236L218 240 205 246H90"/>
            <path class="w-coral" d="M583 325L745 321 755 365Q770 400 810 403M583 325L550 405Q540 425 520 427L378 433Q450 470 455 600L458 628 735 587 765 545M755 418L817 415M455 598L615 579M375 430L435 490M490 503H518M484 519H530"/>
            <path class="w-green" d="M583 325L615 245Q635 222 665 223Q740 225 742 320M80 580V655M0 652L458 629M45 531H235M735 610L775 555"/>
            <path class="w-cyan" d="M665 223L755 207M708 225V240M740 213L708 240L745 232M708 230L750 218M720 236L742 222M738 290L765 283M738 290L755 403M748 290L757 325M735 300L750 400 770 403 740 330M755 360L773 380M43 548V652M0 578L42 548"/>
            <path d="M217 285V400M221 400V450" stroke="#20ecf4" stroke-width="10"/>
            <path class="w-cyan" d="M222 300V530"/>
            <path class="w-cyan dotted" d="M42 548H235"/>
            <path class="w-yellow" d="M215 410V530M226 410V530M235 545V487H263V545M0 621H80M210 412H222M230 410L236 545"/>
            <path class="w-yellow" d="M735 587L765 545Q780 522 825 520"/>
            <path class="w-coral" d="M740 587Q760 530 800 525"/>
            <path class="w-maroon" d="M645 544H805M645 588H740Q760 580 765 550L800 543M645 618Q760 615 780 580L805 543M650 621L680 612"/>
            <path d="M805 543Q800 590 755 604" fill="none" stroke="#780818" stroke-width="7"/>
            <path d="M622 530H645V635H622Z" fill="#0ce010" stroke="#069a08" stroke-width="2"/>
            <path d="M632 522V636M622 578H645" stroke="#078c0a" stroke-width="3"/>
            <path d="M220 402L272 397" stroke="#e01028" stroke-width="6"/>
          </g>
          <g class="triad">
            <path d="M493 479V443" stroke="#10d818"/><path d="M490 459l3-18 3 18z" fill="#2fe034"/>
            <path d="M493 480H520" stroke="#e01010"/><path d="M516 477l14 3-14 3z" fill="none" stroke="#e01010" stroke-width="1.500"/>
            <circle cx="493" cy="480" r="1.500" fill="#0010a0"/>
            <text x="492" y="436">Y</text><text x="536" y="481">X</text><text x="492" y="480">Z</text>
          </g>
        </svg>
      </div>
    </div>

    <div class="toolbar lower-tools" role="toolbar" aria-label="Collectors and visualization">
      <i class="grip wide"></i>
      <button class="tool" aria-label="Assemblies"><svg viewBox="0 0 24 24"><use href="#folder"/><use href="#blocks"/></svg></button>
      <button class="tool" aria-label="Components"><svg viewBox="0 0 24 24"><use href="#folder"/><use href="#box" x="4" y="9" width="19" height="15" color="#3448d8"/></svg></button>
      <button class="tool" aria-label="Materials"><svg viewBox="0 0 24 24"><use href="#folder"/><path d="M9 9h12v13H9z" fill="#f3ede0"/><use href="#hourglass"/></svg></button>
      <button class="tool" aria-label="Properties"><svg viewBox="0 0 24 24" class="axis"><use href="#folder"/><use href="#thick"/><text x="5" y="10">t</text></svg></button>
      <button class="tool" aria-label="Load collectors"><svg viewBox="0 0 24 24"><use href="#folder"/><use href="#reddown" y="1"/><circle cx="12" cy="21" r="2"/><path d="M16 16h8v7h-8z" fill="#65cd35" stroke="#2d8010"/><path d="M17 18.500h6M17 20.500h6" stroke="#1d600a"/></svg></button>
      <button class="tool" aria-label="System collectors"><svg viewBox="0 0 24 24"><use href="#folder"/><path d="M13 6v9l-6 4M13 15l5 3" fill="none" stroke="#6268a8" stroke-width="2"/><path d="M16 16h8v7h-8z" fill="#65cd35" stroke="#2d8010"/><path d="M17 18.500h6M17 20.500h6" stroke="#1d600a"/></svg></button>
      <button class="drop" aria-label="Collector options"><svg><use href="#caret"/></svg></button>
      <i class="sep"></i>
      <button class="tool" aria-label="Delete"><svg viewBox="0 0 24 24"><path d="M7 3l5 5 5-5 4 4-5 5 5 5-4 4-5-5-5 5-4-4 5-5-5-5z" fill="#e33a3c" stroke="#9c1518"/></svg></button>
      <button class="tool" aria-label="Card edit"><svg><use href="#cards"/></svg></button>
      <button class="tool" aria-label="Organize"><svg viewBox="0 0 24 24"><use href="#folder" width="20" height="20"/><use href="#folder" x="5" y="4" width="20" height="20"/><path d="M4 12q0 6 6 6v4l6-6-6-5v3q-3 0-4-2z" fill="#dc2418"/></svg></button>
      <button class="tool" aria-label="Renumber"><svg viewBox="0 0 24 24" class="axis"><text x="10" y="8">2</text><text x="8" y="16">1</text><text x="9" y="24">3</text><path d="M7 4Q3 4 4 8M18 13q4-1 3-4" stroke="#c81020"/><path d="M1 7h6l-3 4zM18 9h6l-3-4z" fill="#c81020"/></svg></button>
      <i class="grip wide"></i>
      <div class="combo auto"><svg viewBox="0 0 18 24"><use href="#sheet" y="1" width="18" height="17" fill="#7e88bc" stroke="#495080"/><path d="M1 19h16v3H1z" fill="url(#gRain)" stroke="#333" stroke-width=".5"/></svg><select aria-label="Geometry color mode"><option>Auto</option></select><svg class="arrow" viewBox="0 0 16 22"><path d="M4 9h8l-4 4.500z"/></svg></div>
      <button class="tool" aria-label="Wireframe geometry"><svg viewBox="0 0 24 24"><use href="#sheet" fill="#fff" stroke="#333"/></svg></button><button class="drop" aria-label="Wireframe options"><svg><use href="#caret"/></svg></button>
      <button class="tool" aria-label="Shaded geometry"><svg viewBox="0 0 24 24"><use href="#sheet" fill="#7c7eb8" stroke="#333"/></svg></button><button class="drop" aria-label="Shaded options"><svg><use href="#caret"/></svg></button>
      <button class="tool" aria-label="Transparency"><svg viewBox="0 0 24 24"><path d="M12 1l10 5v12l-10 5-10-5V6z" fill="#b5b9e0" stroke="#555a80"/><path d="M12 11v12l10-5V6z" fill="#8b90c0"/><path d="M15 13l5-2v6l-5 2z" fill="#dde"/><path d="M2 6l10 5 10-5M12 11v12" fill="none" stroke="#555a80"/></svg></button>
      <i class="sep"></i>
      <div class="combo comp"><svg viewBox="0 0 18 24"><use href="#cube3" x="1" width="17" height="18" color="#6e72a8"/><path d="M1 19h16v3H1z" fill="url(#gRain)" stroke="#333" stroke-width=".5"/></svg><select aria-label="Element color mode"><option>By Comp</option></select><svg class="arrow" viewBox="0 0 16 22"><path d="M4 9h8l-4 4.500z"/></svg></div>
      <button class="tool" aria-label="Wireframe elements"><svg color="#fff"><use href="#cube3"/></svg></button><button class="drop" aria-label="Wireframe element options"><svg><use href="#caret"/></svg></button>
      <button class="tool" aria-label="Shaded elements"><svg color="#7d80b4"><use href="#cube3"/></svg></button><button class="drop" aria-label="Shaded element options"><svg><use href="#caret"/></svg></button>
      <button class="tool" aria-label="1D elements"><svg viewBox="0 0 24 24"><path d="M6 16l12-8" stroke="#444" stroke-width="2"/></svg></button><button class="drop" aria-label="1D options"><svg><use href="#caret"/></svg></button>
      <button class="tool" aria-label="2D elements"><svg viewBox="0 0 24 24"><path d="M12 6l10 6-10 6-10-6zM7 9l10 6M17 9L7 15" fill="#8b8b88" stroke="#444"/></svg></button><button class="drop" aria-label="2D options"><svg><use href="#caret"/></svg></button>
      <button class="tool" aria-label="3D elements"><svg viewBox="0 0 24 24"><path d="M12 4l11 6v4l-11 6-11-6v-4z" fill="#7086e0" stroke="#1828a0"/><path d="M12 4l11 6-11 6-11-6z" fill="#c5cefa" stroke="#1828a0"/></svg></button><button class="drop" aria-label="3D options"><svg><use href="#caret"/></svg></button>
      <button class="tool" aria-label="Shrink elements"><svg viewBox="0 0 24 24"><path d="M5 7l5-1v5l-5 1zM14 5l5-2v5l-5 2zM5 16l5-1v5l-5 1zM14 14l5-2v5l-5 2z" fill="#7d80b4" stroke="#404468"/></svg></button>
      <button class="tool" aria-label="Visual options"><svg viewBox="0 0 24 24"><path d="M9 17h6l1 5H8z" fill="#645246"/><path d="M2 3h20v14H2z" fill="url(#gScreen)" stroke="#555"/></svg></button>
    </div>
    <div class="toolbar star-row"><i class="grip wide"></i><button class="tool" aria-label="Favorites"><svg viewBox="0 0 24 24"><path d="M12 2l3 7 8 1-6 5 2 8-7-4-7 4 2-8-6-5 8-1z" fill="#f3c318" stroke="#a67a08"/></svg></button></div>

    <div class="panel">
      <div class="columns">
        <div><button>nodes</button><button>node edit</button><button>temp nodes</button><button>distance</button><button>points</button></div>
        <div><button>lines</button><button>line edit</button><button>length</button></div>
        <div><button>surfaces</button><button>surface edit</button><button>defeature</button><button>midsurface</button><button>dimensioning</button></div>
        <div><button>solids</button><button>solid edit</button><button>ribs</button></div>
        <div><button>quick edit</button><button>edge edit</button><button>point edit</button><button>autocleanup</button></div>
      </div>
      <div class="pages" role="radiogroup" aria-label="Page">
        <label><input type="radio" name="page" checked>Geom</label>
        <label><input type="radio" name="page">1D</label>
        <label><input type="radio" name="page">2D</label>
        <label><input type="radio" name="page">3D</label>
        <label><input type="radio" name="page">Analysis</label>
        <label><input type="radio" name="page">Tool</label>
        <label><input type="radio" name="page">Post</label>
      </div>
    </div>
  </section>
</main>

<footer class="status">
  <span class="message">Geometry</span>
  <span class="field"></span><span class="field">Module Model</span><span class="field w"></span><span class="field last"><i></i>spc</span>
</footer>
<div class="taskbar" aria-hidden="true"><svg class="orb" viewBox="0 0 34 14"><circle cx="17" cy="17" r="16" fill="#5c91b0" stroke="#254b66"/><path d="M9 12q4-4 8-2v4H8z" fill="#e8622c"/><path d="M18 10q4 2 8-1l-1 5h-7z" fill="#8cc63c"/></svg><i class="task"></i><i class="gap"></i><i class="task sm"></i><i class="task"></i><i class="task"></i><i class="task"></i><i class="task"></i><i class="task"></i></div>
</body>
</html>
```

FILE: styles.css
```css
* { box-sizing: border-box; }
body {
  margin: 0;
  height: 100vh;
  display: flex;
  flex-direction: column;
  overflow: hidden;
  background: #f0f0f0;
  color: #000;
  font: 11px "Liberation Sans", Arial, sans-serif;
}
button { border: 0; padding: 0; margin: 0; background: none; font: inherit; color: inherit; }
svg { display: block; flex: none; }
i { font-style: normal; }
.sprite { position: absolute; width: 0; height: 0; }

/* Title bar */
.titlebar {
  position: relative;
  flex: none;
  display: flex;
  align-items: center;
  height: 22px;
  border-bottom: 1px solid #35587c;
  background:
    radial-gradient(circle at 318px 14px, #8d7a50 0 4px, transparent 8px),
    radial-gradient(ellipse at 350px 15px, #7f9cba 0, transparent 20px),
    radial-gradient(ellipse at 555px 14px, #48525c 0 5px, transparent 10px),
    radial-gradient(ellipse at 630px 14px, #27619e 0, transparent 60px),
    linear-gradient(90deg, transparent 530px, #3c80c6 542px, #4089d2 700px, #5ca9e6 755px, transparent 764px),
    linear-gradient(90deg, #9bb4d3, #b0cdee 240px, #a9cdf3 530px, #9fcdf8 800px, #92c6f4 1000px, #a6d2f5);
}
.app-icon { width: 16px; height: 18px; margin-right: 5px; }
h1 { margin: 0; font: 12px "Noto Sans", "Open Sans", sans-serif; }
.window-buttons { position: absolute; top: 0; right: 4px; display: flex; border: 1px solid #40546a; border-top: 0; border-radius: 0 0 5px 5px; overflow: hidden; }
.window-buttons button { width: 28px; height: 17px; border-right: 1px solid #60788c; background: linear-gradient(#dae7f2, #b0c5d8 48%, #8faac3 50%, #bdd4e8); }
.window-buttons .close { width: 45px; border: 0; background: linear-gradient(#e3a599, #cd6856 48%, #b42d18 50%, #d17050); }
.window-buttons svg { width: 100%; height: 17px; }
.ime { position: absolute; z-index: 2; top: 3px; right: 178px; display: flex; align-items: center; width: 206px; height: 24px; padding-left: 31px; border: 1px solid #a8bdd0; background: #fff; }
.ime-logo { position: absolute; left: -2px; top: -4px; width: 28px; height: 28px; }
.ime-lang { width: 20px; font: bold 15px/22px "Noto Sans CJK SC", sans-serif; color: #2272c3; }
.ime-i { width: 22px; height: 22px; }

/* Menu */
.menubar { flex: none; display: flex; gap: 15px; height: 19px; padding-left: 7px; border-bottom: 1px solid #b6bccf; background: linear-gradient(#fff, #e6eaf6 40%, #d5dbee 45%, #e0e5f4); font: 12px "Noto Sans", "Open Sans", sans-serif; }
.menubar button { white-space: nowrap; }

/* Toolbars */
.toolbar { display: flex; align-items: center; flex: none; }
.top-tools { height: 35px; margin-bottom: 1px; }
.tool { flex: none; display: grid; place-items: center; width: 28px; height: 26px; }
.tool svg { width: 22px; height: 22px; }
.tool.on { background: linear-gradient(#fbcf98, #fda65c); }
.faded { opacity: .3; filter: grayscale(1); }
.drop { flex: none; width: 10px; height: 24px; }
.drop svg { width: 10px; height: 24px; }
.grip { flex: none; width: 10px; height: 24px; background: radial-gradient(circle, #000 1px, transparent 1px) center / 6px 6px repeat-y; }
.grip.mid { width: 12px; }
.grip.wide { width: 13px; }
.grip.pale { opacity: .3; width: 10px; margin: 0 4px 0 50px; }
.grip.flat { width: 28px; height: 10px; margin-bottom: 1px; background: radial-gradient(circle, #000 1px, transparent 1px) center / 7px 10px repeat-x; }
.sep { flex: none; width: 1px; height: 18px; margin: 0 4px; background: #aaa; }
.top-tools .sep { margin: 0 5px; }
.axis path { stroke-width: 2; }
.axis .g, .axis .r, .axis .b { fill: none; }
.axis .g { stroke: #1fae38; } .axis .r { stroke: #dd3040; } .axis .b { stroke: #3535b8; }
.axis .gf { fill: #1fae38; stroke: #1fae38; } .axis .rf { fill: #dd3040; stroke: #dd3040; } .axis .bf { fill: #3535b8; stroke: #3535b8; }
.axis .gf, .axis .rf, .axis .bf { stroke-width: 1; }
.axis path[stroke]:not([fill]) { fill: none; }
.axis text { font: bold 9px "Liberation Sans", Arial, sans-serif; fill: #444; }
.cap text { font: bold 10px "Liberation Sans", Arial, sans-serif; fill: #555; }

.workspace { flex: 1; min-height: 0; display: flex; gap: 6px; }

/* Left dock */
.dock { flex: none; width: 427px; padding-left: 3px; display: flex; flex-direction: column; }
.tabs { display: flex; flex: none; height: 22px; align-items: flex-end; }
.tabs button[role] { height: 21px; padding: 3px 13px 0 10px; border-right: 1px solid #555; border-top: 1px solid #fff; border-radius: 0 3px 0 0; font-size: 11px; }
.tabs button.active { height: 22px; padding: 0 7px 0 11px; font-weight: bold; font-size: 12px; }
.tabs .dock-close { align-self: flex-start; margin-left: auto; padding: 0 4px 0 0; margin-top: -4px; }
.dock-close svg { width: 8px; height: 8px; }
.browser { flex: 1; min-height: 0; display: flex; flex-direction: column; padding-bottom: 2px; border: 1px solid #fff; border-right-color: #777; border-bottom: 2px solid #777; }
.views { height: 27px; }
.views .tool { width: 29px; }
.views .tool.on { width: 24px; margin: 0 2px 0 4px; height: 24px; }
.views.states { height: 31px; padding: 0 0 1px 2px; }
.states .tool { width: 28px; }
.states .grip ~ .tool:nth-child(n+11) { width: 31px; }

.pane { display: flex; min-height: 0; background: #fff; border: 1px solid #8a8a8a; border-right: 0; border-bottom: 0; overflow: hidden; }
.tree { flex: 244 1 0; }
.props { flex: 300 1 0; }
.pane-body { flex: 1; min-width: 0; overflow: hidden; }
table { width: 100%; table-layout: fixed; border-collapse: separate; border-spacing: 0; }
th { height: 22px; padding: 0 2px; border-right: 1px solid #c4c4c4; border-bottom: 1px solid #a0a0a0; background: linear-gradient(#fff, #e4e4e4); font: 12px "Noto Sans", "Open Sans", sans-serif; text-align: left; }
td { height: 18px; padding: 0; border-bottom: 1px solid #edf1f2; line-height: 15px; white-space: nowrap; }
.c-ent { width: 217px; } .c-id { width: 20px; } .c-col { width: 20px; } .c-name { width: 166px; }
.tree th:nth-child(2) { padding: 0 0 0 4px; }
.tree td:nth-child(2) { text-align: right; padding-right: 2px; }
.wheel { display: block; width: 14px; height: 14px; border-radius: 50%; background: conic-gradient(#2bdcf0, #2828e8, #f028d8, #f02020, #f0e020, #28d828, #2bdcf0); }
.node { display: flex; align-items: center; height: 17px; }
.node svg { width: 18px; height: 18px; }
.node.top { padding-left: 5px; }
.node.top svg { margin: 0 7px 0 4px; }
.node.leaf { padding-left: 37px; background: linear-gradient(90deg, #aaa 1px, transparent 1px) 9px 0 / 2px 100% no-repeat, linear-gradient(90deg, #aaa 1px, transparent 1px) 28px 0 / 2px 100% no-repeat, repeating-linear-gradient(90deg, #aaa 0 1px, transparent 1px 2px) 28px 8px / 9px 1px no-repeat; }
.node.leaf svg { margin-right: 7px; }
.node.comp svg { width: 15px; height: 15px; margin: 0 3px 0 1px; }
.node.comp svg + svg { margin: 0 8px 0 2px; }
.twist { display: inline-block; flex: none; width: 9px; height: 9px; border: 1px solid #8c98a8; background: linear-gradient(#33507c, #33507c) center / 5px 1px no-repeat, #f8f8f8; }
.twist.plus { background: linear-gradient(#33507c, #33507c) center / 5px 1px no-repeat, linear-gradient(#33507c, #33507c) center / 1px 5px no-repeat, #f8f8f8; }
.swatch { display: block; width: 12px; height: 12px; margin-left: 2px; border: 1px solid #000; }
.red { background: #ff301c; } .blue { background: #3370f8; } .coral { background: #ff8458; } .yellow { background: #ff0; } .cyan { background: #0ff; } .magenta { background: #d010c0; }
.scroll { flex: none; width: 17px; display: flex; flex-direction: column; align-items: center; background: #f0f0f0; padding: 5px 0 4px; }
.scroll .up, .scroll .down { border: 3px solid transparent; border-bottom: 4px solid #444; border-top: 0; margin-bottom: 8px; }
.scroll .down { border-bottom: 0; border-top: 4px solid #444; margin: auto 0 2px; }
.thumb { width: 15px; height: 123px; border: 1px solid #999; border-radius: 2px; background: repeating-linear-gradient(#555 0 1px, transparent 1px 3px) center / 7px 8px no-repeat, linear-gradient(90deg, #f8f8f8, #ccc); }
.thumb.short { height: 64px; }
.splitter { flex: none; display: flex; align-items: center; justify-content: center; height: 8px; position: relative; }
.splitter span { width: 8px; height: 2px; background: repeating-linear-gradient(90deg, #555 0 2px, transparent 2px 3px); }
.splitter b { position: absolute; right: 13px; border: 6px solid transparent; border-top-color: #222; border-bottom: 0; }
.props td:first-child { padding-left: 21px; }
.props td:nth-child(2) { padding-left: 4px; }
.props .child td:first-child { padding-left: 40px; }
.props .parent td:first-child { padding-left: 5px; }
.parent .twist { margin-right: 7px; }
.dim { color: #6d6d6d; }
input[type=checkbox] { appearance: none; display: block; width: 13px; height: 13px; margin: 1px 0; border: 1px solid #7e8488; background: linear-gradient(135deg, #c4c8cc, #fff); box-shadow: inset 0 0 0 1px #eee; }
input[type=checkbox]:checked::before { content: ""; display: block; width: 4px; height: 7px; margin: 1px 0 0 4px; border: solid #206a9a; border-width: 0 2px 2px 0; transform: rotate(38deg); }

/* Right side */
.stage { flex: 1; min-width: 0; display: flex; flex-direction: column; margin-right: 3px; border-left: 1px solid #777; border-right: 1px solid #777; }
.view-row { flex: 1; min-height: 0; display: flex; padding-right: 7px; }
.strip { flex: none; width: 44px; padding-left: 2px; display: flex; flex-direction: column; align-items: center; gap: 2px; }
.strip .on { outline: 1px solid #d59040; }
.canvas { flex: 1; min-width: 0; position: relative; border-right: 1px solid #000; background: linear-gradient(#2d5681, #a0a09e); }
.model { width: 100%; height: 100%; }
.model-info { position: absolute; top: 9px; right: 4px; margin: 0; font-size: 13px; line-height: 14px; color: #fff; }
.model path { stroke-linejoin: round; }
[class^="w-"] { fill: none; stroke-width: 4; }
.thick { stroke-width: 6; }
.join { stroke-width: 1; }
.dotted { stroke-dasharray: 4 3; }
.w-blue { stroke: #3d70ef; } .w-orange { stroke: #f5aa3c; } .w-cyan { stroke: #20ecf4; } .w-magenta { stroke: #d614dc; } .w-sky { stroke: #66b2fa; } .w-green { stroke: #18e61c; } .w-yellow { stroke: #f7f02c; } .w-coral { stroke: #f28d6e; } .w-maroon { stroke: #780818; } .w-red { stroke: #de4a35; }
.weld { fill: #ffe820; stroke: #f5a020; stroke-width: 3; stroke-dasharray: 3 2; }
.triad text { font: 13px "Liberation Sans", Arial, sans-serif; fill: #fff; }
.lower-tools { height: 32px; }
.lower-tools > .grip.wide:first-child, .star-row .grip { margin-left: 1px; }
.combo { flex: none; display: flex; align-items: center; width: 98px; height: 21px; background: #fff; }
.combo.auto { margin-right: 2px; }
.combo.comp { width: 104px; }
.combo svg { width: 18px; height: 22px; }
.combo select { flex: 1; min-width: 0; height: 21px; border: 0; padding: 0 3px; background: none; appearance: none; font: 11px "Liberation Sans", Arial, sans-serif; color: #000; }
.combo .arrow { width: 16px; height: 21px; background: #f0f0f0; }
.star-row { height: 32px; }

.panel { flex: none; display: flex; margin: 0 6px 3px 2px; padding: 8px 0 3px; border-bottom: 1px solid #888; font-size: 13px; }
.columns { flex: 1; display: grid; grid-template-columns: 169fr 169fr 169fr 169fr 160fr; align-items: start; }
.columns div { display: grid; grid-auto-rows: 20px; }
.columns button { border: 1px solid #fff; border-right-color: #707070; border-bottom: 2px solid #808080; line-height: 16px; }
.pages { flex: none; width: 85px; padding-left: 8px; }
.pages label { display: flex; align-items: center; gap: 8px; height: 20px; }
input[type=radio] { appearance: none; width: 10px; height: 10px; margin: 0; border: 1px solid; border-color: #111 #e6f0e6 #e6f0e6 #111; border-radius: 50%; background: #d9e8da; }
input[type=radio]:checked { background: radial-gradient(circle, #000 2px, #edf6ed 3px); }

.status { flex: none; display: flex; gap: 2px; height: 25px; padding-top: 2px; font-size: 13px; line-height: 20px; }
.message { flex: 1; padding-left: 14px; line-height: 24px; }
.field { flex: none; width: 125px; height: 21px; padding-left: 2px; border: 2px solid #222; border-width: 2px 0 0 1px; border-right: 1px solid #fff; border-bottom: 1px solid #fff; line-height: 19px; }
.field.w { width: 138px; }
.field.last { width: 143px; padding-left: 5px; }
.field i { display: inline-block; width: 10px; height: 11px; margin-right: 5px; border: 1px solid #222; background: #f00; vertical-align: -1px; }
.taskbar { flex: none; display: flex; height: 7px; border-top: 1px solid #34526d; background: linear-gradient(90deg, #6686a5, #5a80a3 50%, #3f617e); }
.orb { width: 34px; height: 14px; margin: -6px 16px 0 10px; position: relative; }
.task { flex: none; width: 108px; background: linear-gradient(#d7e2ec, #9fb3c6); border: 1px solid #4c667e; border-bottom: 0; border-radius: 2px 2px 0 0; }
.gap { flex: none; width: 375px; background: radial-gradient(circle at 24px 8px, #7fc8ee, transparent 20px), radial-gradient(circle at 150px 8px, #58b8e8, transparent 16px), radial-gradient(circle at 290px 6px, #24384c 0 5px, transparent 12px); }
.task.sm { width: 100px; margin-right: 9px; }
```
